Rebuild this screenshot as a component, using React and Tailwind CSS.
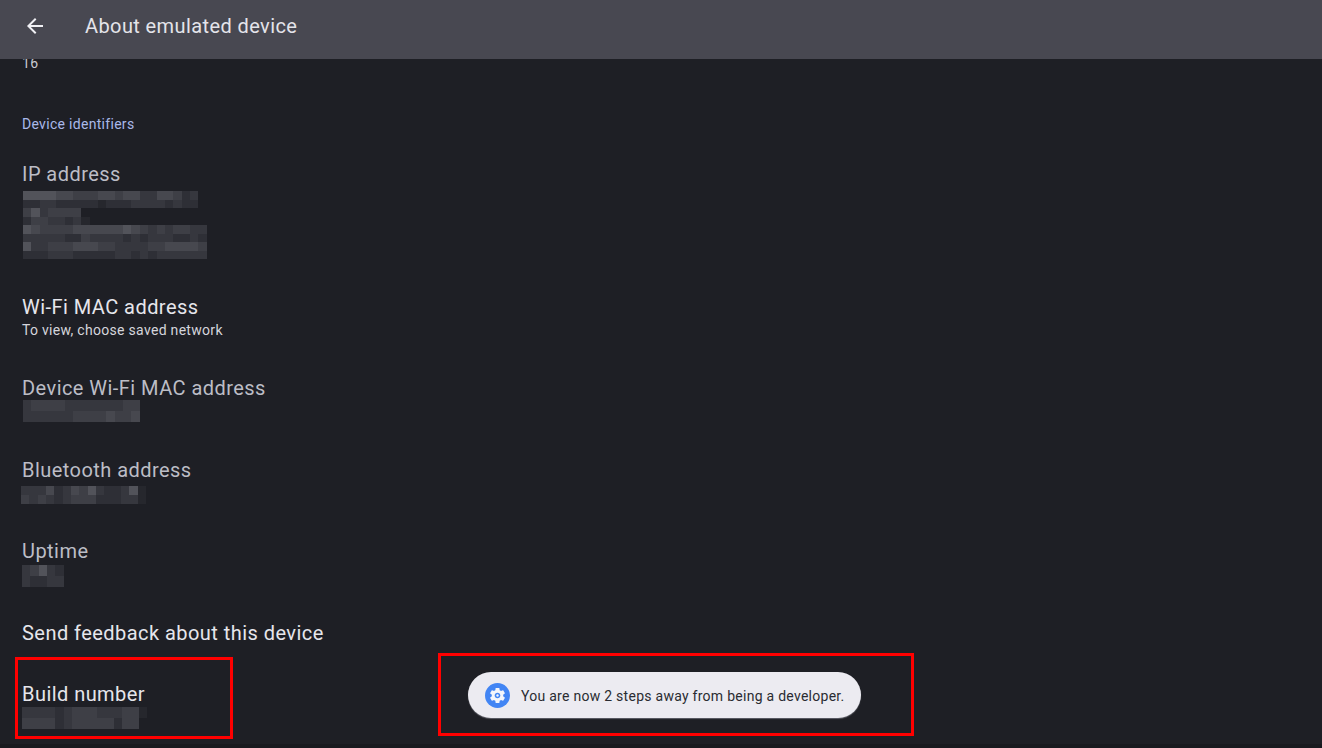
import React from "react";

// brightness steps used by the blurred values, 0 is the page background
const shades = ["#1e1f25", "#26272d", "#2e2f36", "#36373e", "#3e3f46", "#47484f", "#52535a", "#5e5f66"];

const ipRows = [
  "666655444554553355423",
  "223322222122233332322",
  "4634444",
  "24433231",
  "6544445555556543434433",
  "3333322433332323332232",
  "6334445554433334455554",
  "2223332222233232333333",
];
const deviceMacRows = ["34444333333344", "33333344445445"];
const bluetoothRows = ["333523546322361", "434323444222331"];
const uptimeRows = ["34632", "32233"];
const buildRows = ["333323444333441", "44442344444244"];

function Blur({ rows, cellHeight = "h-[8.5px]", className = "" }) {
  return (
    <div className={className}>
      {rows.map((row, i) => (
        <div key={i} className={`flex ${cellHeight}`}>
          {row.split("").map((c, j) => (
            <div key={j} className="w-[8.35px] h-full" style={{ backgroundColor: shades[Number(c)] }} />
          ))}
        </div>
      ))}
    </div>
  );
}

function Row({ title, className = "", dim, children }) {
  return (
    <div className={className}>
      <p className={`text-[20px] leading-[26px] tracking-[0.45px] ${dim ? "text-[#bcbdc6]" : "text-[#e6e6ec]"}`}>{title}</p>
      {children}
    </div>
  );
}

export default function App() {
  return (
    <div className="relative h-[748px] w-[1322px] overflow-hidden bg-[#1e1f25] flex flex-col font-['Roboto',sans-serif]">
      <header className="h-[59px] shrink-0 bg-[#484851] flex items-center pl-[23px] pb-[7px] z-10">
        <svg width="24" height="24" viewBox="0 0 24 24" fill="#f1f1f5">
          <path d="M20 11H7.83l5.59-5.59L12 4l-8 8 8 8 1.41-1.41L7.83 13H20v-2z" />
        </svg>
        <h1 className="ml-[38px] text-[20px] tracking-[0.4px] text-[#e4e4ea]">About emulated device</h1>
      </header>

      <main className="flex-1 overflow-hidden pl-[22px] -mt-[4px]">
        <p className="text-[14px] leading-[16px] tracking-[0.3px] text-[#c9cad2]">16</p>
        <p className="mt-[44px] text-[14px] leading-[18px] tracking-[0.3px] text-[#a9b9ea]">Device identifiers</p>

        <Row title="IP address" dim className="mt-[28px]">
          <Blur rows={ipRows} className="mt-[4px] ml-[1px]" />
        </Row>
        <Row title="Wi-Fi MAC address" className="mt-[35px]">
          <p className="mt-[1px] text-[14px] leading-[18px] tracking-[0.3px] text-[#d5d5dc]">To view, choose saved network</p>
        </Row>
        <Row title="Device Wi-Fi MAC address" dim className="mt-[36px]">
          <Blur rows={deviceMacRows} cellHeight="h-[11px]" className="-mt-[1px] ml-[1px]" />
        </Row>
        <Row title="Bluetooth address" dim className="mt-[35px]">
          <Blur rows={bluetoothRows} cellHeight="h-[9px]" className="mt-[3px] -ml-[1px]" />
        </Row>
        <Row title="Uptime" dim className="mt-[34px]">
          <Blur rows={uptimeRows} cellHeight="h-[11px]" className="mt-[1px]" />
        </Row>
        <Row title="Send feedback about this device" className="mt-[33px]" />
        <Row title="Build number" className="mt-[35px]">
          <Blur rows={buildRows} cellHeight="h-[11px]" />
        </Row>
      </main>

      <div className="h-[4px] shrink-0 bg-[#191a1f]" />

      {/* annotation boxes drawn on top of the screenshot */}
      <div className="absolute left-[15px] top-[657px] w-[218px] h-[82px] border-[3px] border-[#ff0000]" />
      <div className="absolute left-[438px] top-[653px] w-[476px] h-[83px] border-[3px] border-[#ff0000]" />

      {/* toast */}
      <div className="absolute left-[468px] top-[672px] w-[393px] h-[46px] rounded-full bg-[#ecebf1] shadow-[0_1px_1px_rgba(140,140,150,0.6)] flex items-center pl-[17px]">
        <div className="w-[25px] h-[25px] rounded-full bg-[#4285f4] flex items-center justify-center">
          <svg width="19" height="19" viewBox="0 0 24 24" fill="#f4f6fb">
            <path d="M19.14 12.94c.04-.3.06-.61.06-.94 0-.32-.02-.64-.07-.94l2.03-1.58c.18-.14.23-.41.12-.61l-1.92-3.32c-.12-.22-.37-.29-.59-.22l-2.39.96c-.5-.38-1.03-.7-1.62-.94l-.36-2.54c-.04-.24-.24-.41-.48-.41h-3.84c-.24 0-.43.17-.47.41l-.36 2.54c-.59.24-1.13.57-1.62.94l-2.39-.96c-.22-.08-.47 0-.59.22L2.74 8.87c-.12.21-.08.47.12.61l2.03 1.58c-.05.3-.09.63-.09.94s.02.64.07.94l-2.03 1.58c-.18.14-.23.41-.12.61l1.92 3.32c.12.22.37.29.59.22l2.39-.96c.5.38 1.03.7 1.62.94l.36 2.54c.05.24.24.41.48.41h3.84c.24 0 .44-.17.47-.41l.36-2.54c.59-.24 1.13-.56 1.62-.94l2.39.96c.22.08.47 0 .59-.22l1.92-3.32c.12-.22.07-.47-.12-.61l-2.01-1.58zM12 15.6c-1.98 0-3.6-1.62-3.6-3.6s1.62-3.6 3.6-3.6 3.6 1.62 3.6 3.6-1.62 3.6-3.6 3.6z" />
            <circle cx="12" cy="12" r="1.5" />
          </svg>
        </div>
        <span className="ml-[11px] pt-[2px] text-[14px] tracking-[0.27px] text-[#2a2b31]">You are now 2 steps away from being a developer.</span>
      </div>
    </div>
  );
}
